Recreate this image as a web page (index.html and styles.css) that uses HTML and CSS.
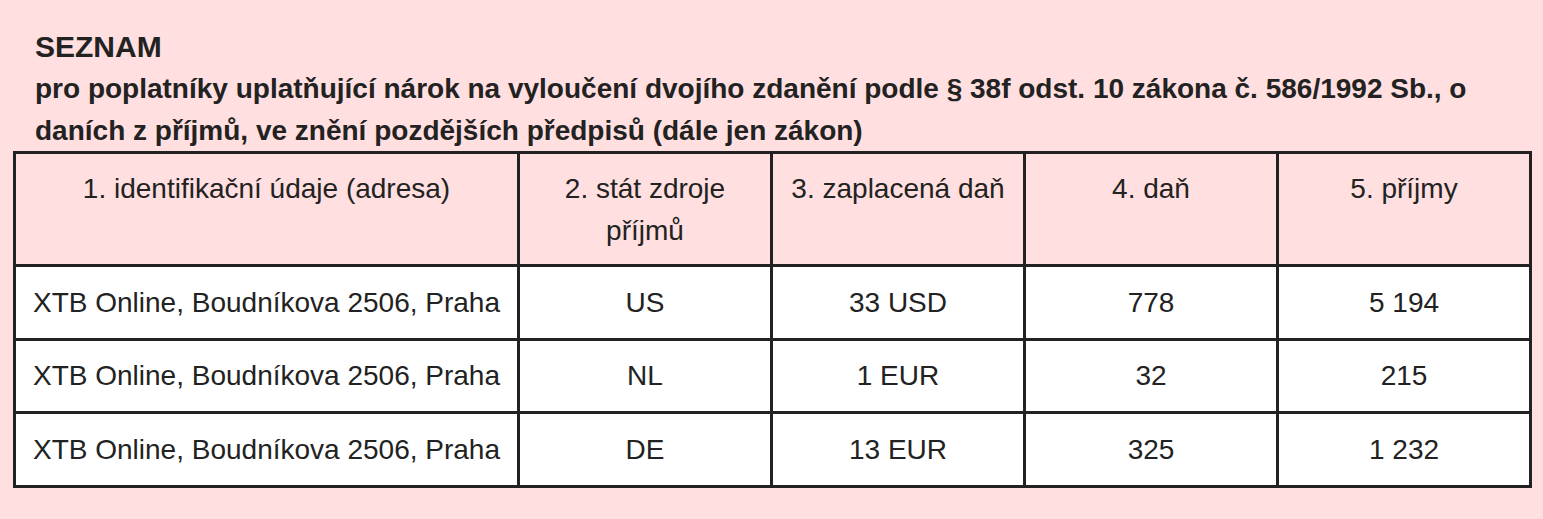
FILE: index.html
```html
<!DOCTYPE html>
<html lang="cs">
<head>
<meta charset="utf-8">
<title>Seznam</title>
<link rel="stylesheet" href="styles.css">
</head>
<body>
<div class="page">
  <div class="heading">
    <h1 class="title">SEZNAM</h1>
    <p class="subtitle">pro poplatníky uplatňující nárok na vyloučení dvojího zdanění podle § 38f odst. 10 zákona č. 586/1992 Sb., o daních z příjmů, ve znění pozdějších předpisů (dále jen zákon)</p>
  </div>
  <table class="list">
    <colgroup>
      <col class="c-addr">
      <col class="c-num">
      <col class="c-num">
      <col class="c-num">
      <col class="c-num">
    </colgroup>
    <thead>
      <tr>
        <th>1. identifikační údaje (adresa)</th>
        <th>2. stát zdroje příjmů</th>
        <th>3. zaplacená daň</th>
        <th>4. daň</th>
        <th>5. příjmy</th>
      </tr>
    </thead>
    <tbody>
      <tr>
        <td>XTB Online, Boudníkova 2506, Praha</td>
        <td>US</td>
        <td>33 USD</td>
        <td>778</td>
        <td>5 194</td>
      </tr>
      <tr>
        <td>XTB Online, Boudníkova 2506, Praha</td>
        <td>NL</td>
        <td>1 EUR</td>
        <td>32</td>
        <td>215</td>
      </tr>
      <tr>
        <td>XTB Online, Boudníkova 2506, Praha</td>
        <td>DE</td>
        <td>13 EUR</td>
        <td>325</td>
        <td>1 232</td>
      </tr>
    </tbody>
  </table>
</div>
</body>
</html>
```

FILE: styles.css
```css
html, body {
  margin: 0;
  padding: 0;
  background: #ffdfdf;
}

body {
  font-family: "Liberation Sans", Arial, Helvetica, sans-serif;
  color: #222;
}

.page {
  padding: 26px 12px 0 13px;
}

.heading {
  padding: 0 22px;
}

.title {
  margin: 0;
  font-size: 30px;
  line-height: 42px;
  font-weight: 700;
}

.subtitle {
  margin: 0;
  font-size: 28px;
  line-height: 41.5px;
  font-weight: 700;
}

.list {
  width: 1518px;
  border-collapse: collapse;
  table-layout: fixed;
  font-size: 28px;
  line-height: 42px;
}

.c-addr { width: 504px; }
.c-num { width: 253px; }

.list th,
.list td {
  border: 3px solid #222;
  padding: 14px 10px;
  text-align: center;
}

.list th {
  font-weight: 400;
  vertical-align: top;
  background: #ffdfdf;
  padding-bottom: 12px;
}

.list td {
  vertical-align: middle;
  background: #fff;
  padding-top: 14.5px;
  padding-bottom: 14px;
}
```
